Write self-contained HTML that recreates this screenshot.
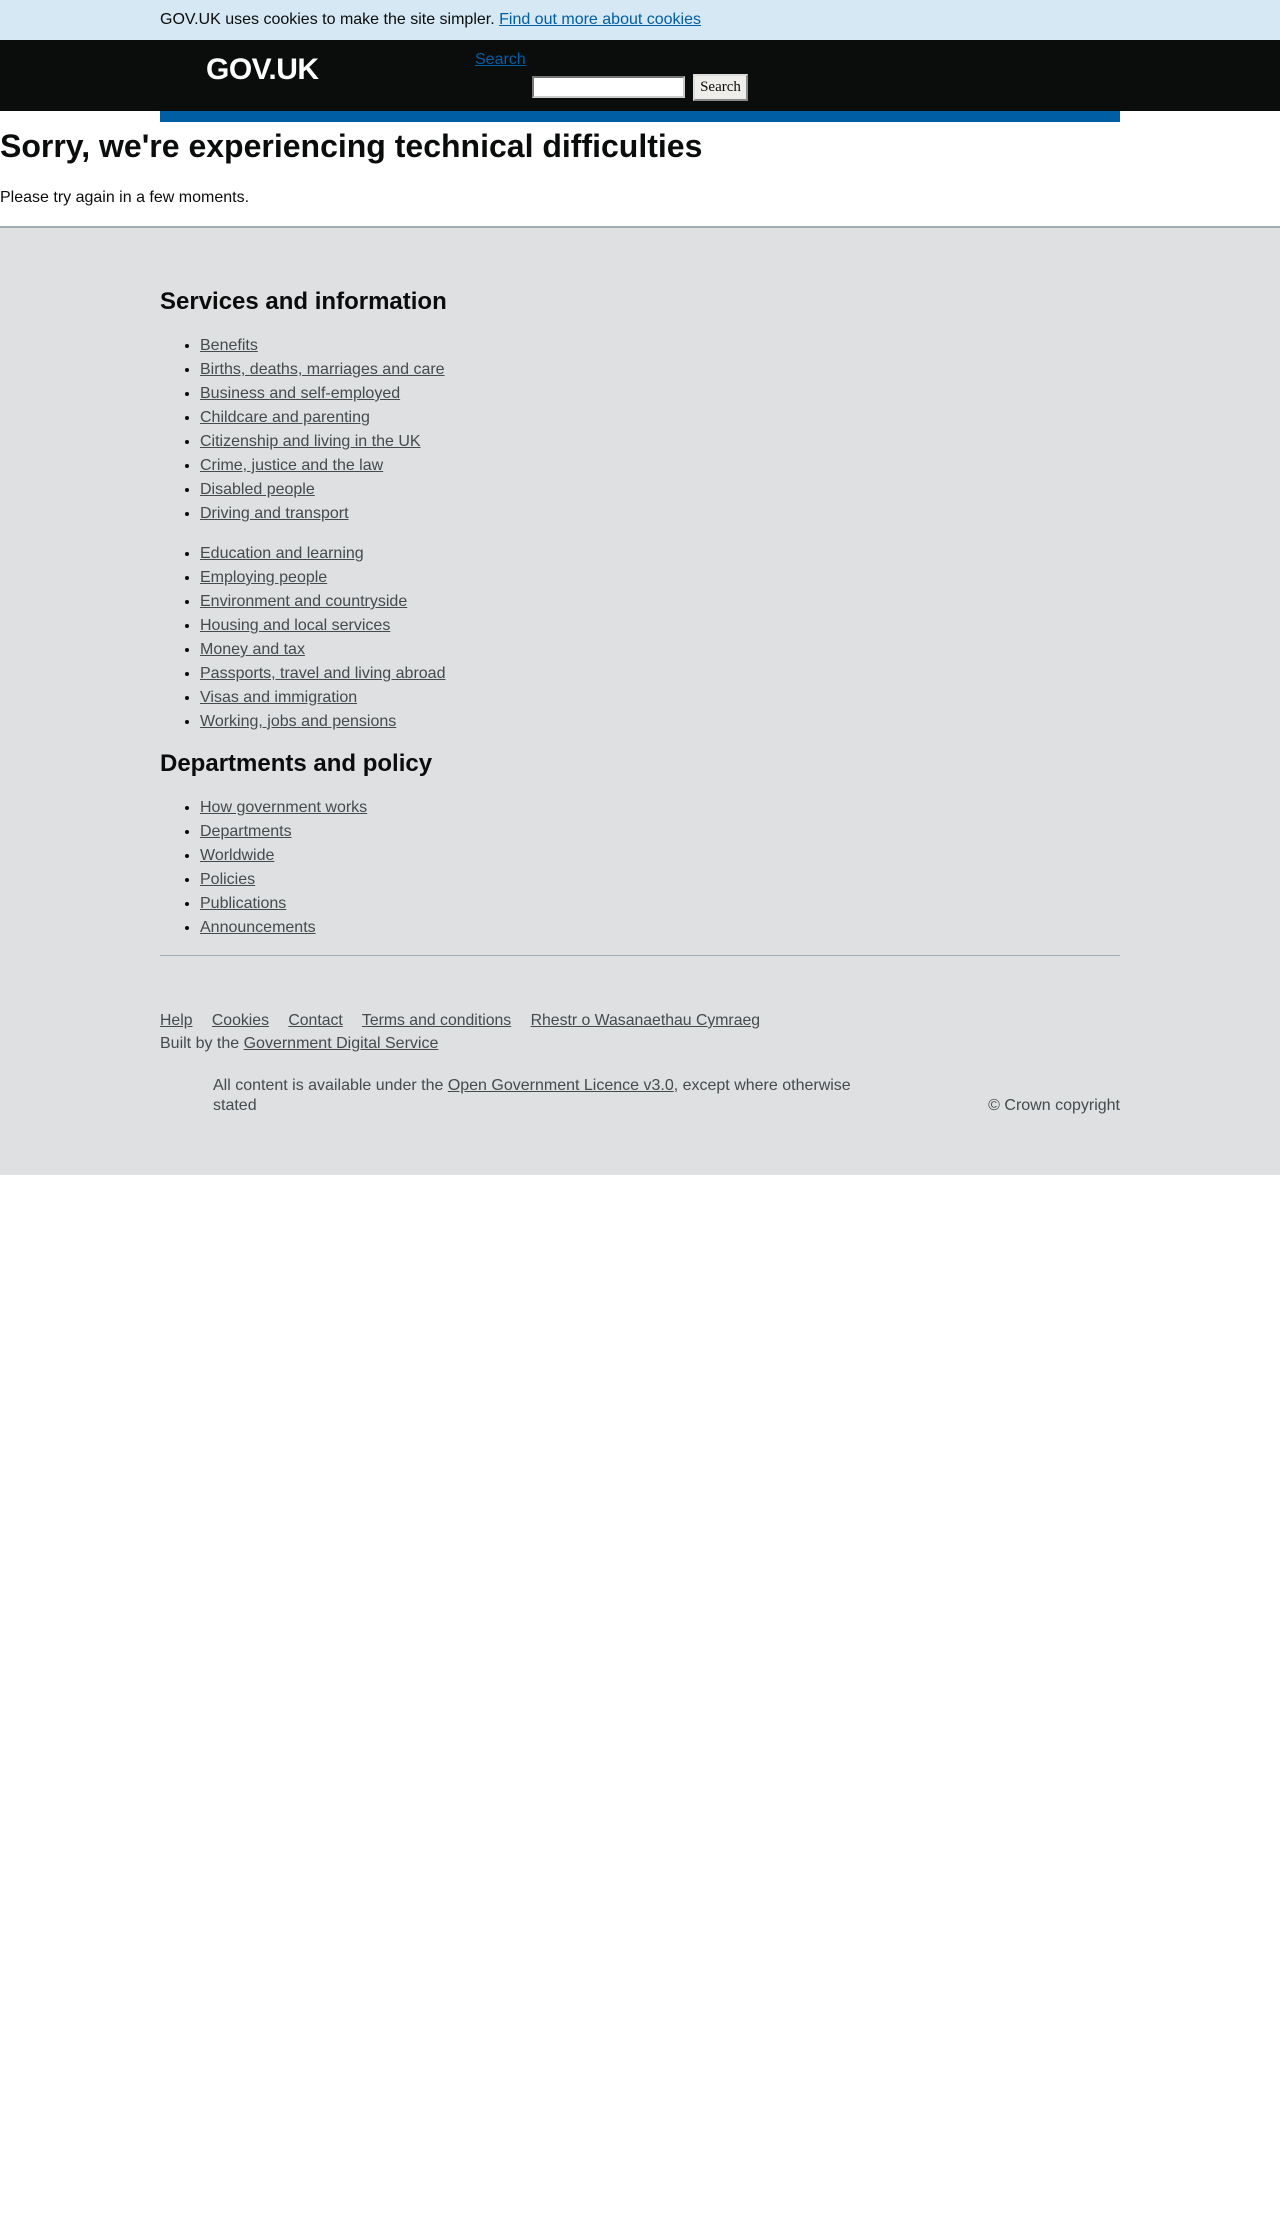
<!DOCTYPE html>
<html><head><meta charset="utf-8"><style>
*{margin:0;padding:0;box-sizing:border-box}
body{width:1280px;height:2238px;background:#fff;font-family:"Liberation Sans",Arial,sans-serif;position:relative;color:#0b0c0c}
.a{position:absolute;white-space:nowrap}
#cookie{position:absolute;left:0;top:0;width:1280px;height:40px;background:#d5e8f3}
#header{position:absolute;left:0;top:40px;width:1280px;height:71px;background:#0b0c0c}
#blue{position:absolute;left:160px;top:111px;width:960px;height:11px;background:#005ea5}
#footer{position:absolute;left:0;top:226px;width:1280px;height:949px;background:#dee0e2;border-top:2px solid #a1acb2}
a{color:#454a4c}
ul{list-style:disc;position:absolute;left:200px;font-size:16px;line-height:24px;color:#0b0c0c}
ul li a{color:#454a4c}
.fl a{margin-right:15px}
</style></head><body>
<div id="cookie"></div>
<div class="a" style="left:160px;top:11px;font-size:16px;color:#0b0c0c">GOV.UK uses cookies to make the site simpler. <a href="#" style="color:#005ea5">Find out more about cookies</a></div>
<div id="header"></div>
<div class="a" style="left:206px;top:53px;font-size:30px;font-weight:bold;color:#fff;letter-spacing:-0.5px">GOV.UK</div>
<div class="a" style="left:475px;top:51px;font-size:16px"><a href="#" style="color:#005ea5">Search</a></div>
<div class="a" style="left:475px;top:78px;font-size:16px;color:#0b0c0c">Search</div>
<div class="a" style="left:532px;top:76px;width:153px;height:22px;background:#fff;border:2px inset #ccc"></div>
<div class="a" style="left:693px;top:74px;width:55px;height:27px;background:#efedea;border:2px outset #ddd;font-family:'Liberation Serif',serif;font-size:15px;text-align:center;line-height:22px">Search</div>
<div id="blue"></div>
<div class="a" style="left:0;top:128px;font-size:32px;font-weight:bold">Sorry, we're experiencing technical difficulties</div>
<div class="a" style="left:0;top:189px;font-size:16px">Please try again in a few moments.</div>
<div id="footer"></div>
<div class="a" style="left:160px;top:288px;font-size:24px;font-weight:bold">Services and information</div>
<ul style="top:334px">
<li><a href="#">Benefits</a></li><li><a href="#">Births, deaths, marriages and care</a></li><li><a href="#">Business and self-employed</a></li><li><a href="#">Childcare and parenting</a></li><li><a href="#">Citizenship and living in the UK</a></li><li><a href="#">Crime, justice and the law</a></li><li><a href="#">Disabled people</a></li><li><a href="#">Driving and transport</a></li></ul>
<ul style="top:542px">
<li><a href="#">Education and learning</a></li><li><a href="#">Employing people</a></li><li><a href="#">Environment and countryside</a></li><li><a href="#">Housing and local services</a></li><li><a href="#">Money and tax</a></li><li><a href="#">Passports, travel and living abroad</a></li><li><a href="#">Visas and immigration</a></li><li><a href="#">Working, jobs and pensions</a></li></ul>
<div class="a" style="left:160px;top:750px;font-size:24px;font-weight:bold">Departments and policy</div>
<ul style="top:796px">
<li><a href="#">How government works</a></li><li><a href="#">Departments</a></li><li><a href="#">Worldwide</a></li><li><a href="#">Policies</a></li><li><a href="#">Publications</a></li><li><a href="#">Announcements</a></li></ul>
<div class="a" style="left:160px;top:955px;width:960px;height:1px;background:#a1acb2"></div>
<div class="a fl" style="left:160px;top:1012px;font-size:15.8px;color:#454a4c"><a href="#">Help</a> <a href="#">Cookies</a> <a href="#">Contact</a> <a href="#">Terms and conditions</a> <a href="#">Rhestr o Wasanaethau Cymraeg</a></div>
<div class="a" style="left:160px;top:1035px;font-size:16px;color:#454a4c">Built by the <a href="#">Government Digital Service</a></div>
<div class="a" style="left:213px;top:1076px;font-size:16px;color:#454a4c;line-height:20px;white-space:normal;width:660px">All content is available under the <a href="#">Open Government Licence v3.0</a>, except where otherwise stated</div>
<div class="a" style="right:160px;top:1096px;font-size:16px;color:#454a4c;line-height:20px">© Crown copyright</div>
</body></html>
